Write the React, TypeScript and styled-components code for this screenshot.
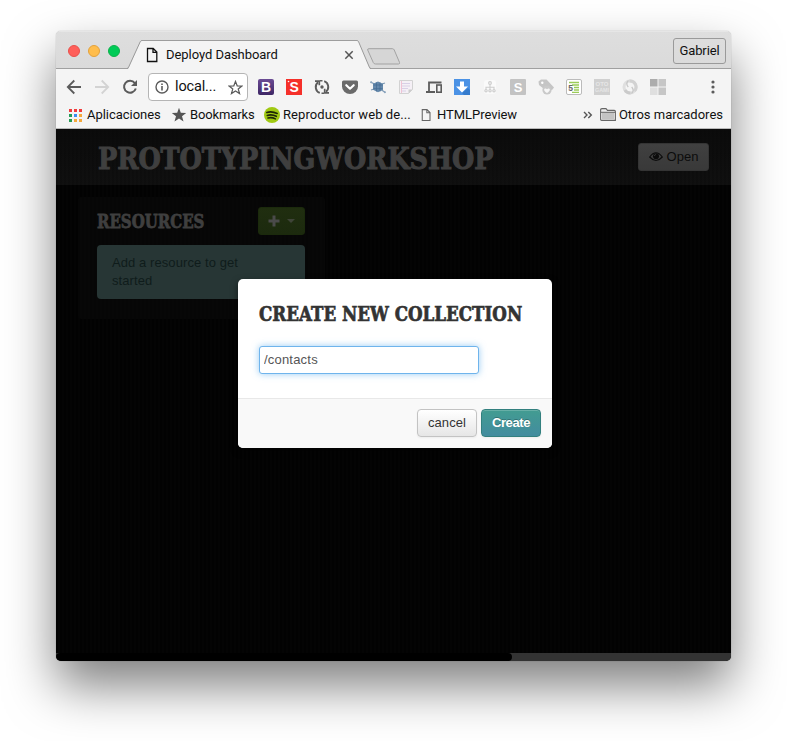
import React from "react";
import styled, { createGlobalStyle } from "styled-components";

const GlobalStyle = createGlobalStyle`
  *, *::before, *::after { box-sizing: border-box; }
  html, body { margin: 0; padding: 0; background: #fff; }
  body { width: 787px; height: 741px; overflow: hidden; }
  svg { display: block; flex: none; }
`;

const Desktop = styled.main`
  width: 787px;
  height: 741px;
  padding: 31px 56px 0;
  background: #fff;
`;

const BrowserWindow = styled.div`
  width: 675px;
  height: 630px;
  display: flex;
  flex-direction: column;
  border-radius: 5px;
  overflow: hidden;
  background: #f4f4f4;
  box-shadow: 0 0 1px rgba(0, 0, 0, 0.45), 0 25px 50px rgba(0, 0, 0, 0.5);
  font-family: Roboto, "Liberation Sans", sans-serif;
  font-size: 13px;
  color: #111;
`;

const TabStrip = styled.div`
  height: 38px;
  flex: none;
  display: flex;
  align-items: flex-end;
  background: linear-gradient(#dedede, #dadada);
  box-shadow: inset 0 1px #e6e6e6, inset 0 -1px #a0a0a0;
`;

const TrafficLights = styled.div`
  width: 71px;
  height: 100%;
  padding: 14px 0 0 12px;
  display: flex;
  gap: 8px;
`;

const Light = styled.span<{ $fill: string; $edge: string }>`
  width: 12px;
  height: 12px;
  border-radius: 50%;
  background: ${(p) => p.$fill};
  border: 1px solid ${(p) => p.$edge};
`;

const Tab = styled.div`
  display: flex;
  height: 29px;
`;

const TabBody = styled.div`
  width: 215px;
  height: 29px;
  display: flex;
  align-items: center;
  background: #f4f4f4;
  border-top: 1px solid #9d9d9d;
  padding: 0 3px 0 4px;
`;

const Label = styled.span<{ $spacing?: number }>`
  white-space: nowrap;
  line-height: 16px;
  letter-spacing: ${(p) => p.$spacing ?? 0}px;
`;

const TabTitle = styled(Label)`
  flex: 1;
  margin-left: 8px;
`;

const NewTab = styled.div`
  margin: 0 0 4px -5px;
`;

const Profile = styled.div`
  width: 53px;
  height: 26px;
  margin: 0 5px 5px auto;
  display: flex;
  align-items: center;
  justify-content: center;
  border: 1px solid #9a9a9a;
  border-radius: 3px;
`;

const Toolbar = styled.div`
  height: 35px;
  flex: none;
  display: flex;
  align-items: center;
  padding: 1px 10px 0;
`;

const NavButtons = styled.div`
  width: 82px;
  display: flex;
  gap: 12px;
`;

const AddressBar = styled.div`
  width: 100px;
  height: 28px;
  display: flex;
  align-items: center;
  padding: 0 4px 0 6px;
  border: 1px solid #b5b5b5;
  border-radius: 4px;
  background: #fff;
  font-size: 14.5px;
`;

const AddressText = styled(Label)`
  flex: 1;
  margin-left: 6px;
`;

const Extensions = styled.div`
  display: flex;
  gap: 12px;
  margin-left: 10px;
`;

const MenuButton = styled.div`
  margin-left: auto;
  display: flex;
`;

const BookmarksBar = styled.div`
  height: 25px;
  flex: none;
  display: flex;
  align-items: center;
  padding: 0 8px 3px 12px;
  border-bottom: 1px solid #b9b9b9;
`;

const Bookmark = styled.div<{ $width?: number; $gap: number }>`
  display: flex;
  align-items: center;
  gap: ${(p) => p.$gap}px;
  width: ${(p) => (p.$width ? `${p.$width}px` : "auto")};
`;

const Chevrons = styled.div`
  margin: 0 7px 0 auto;
`;

const Page = styled.div`
  flex: 1;
  display: flex;
  flex-direction: column;
  position: relative;
  background: repeating-linear-gradient(90deg, #020202 0 2px, #040404 2px 4px);
  font-family: "Liberation Sans", Arial, sans-serif;
`;

const PageHeader = styled.header`
  height: 56px;
  flex: none;
  display: flex;
  align-items: center;
  justify-content: space-between;
  padding: 0 22px 0 42px;
  background: repeating-linear-gradient(90deg, rgba(0, 0, 0, 0.12) 0 2px, transparent 2px 4px),
    linear-gradient(#0b0b0b, #101010);
`;

const SlabHeading = styled.h1<{
  $size: number;
  $width: number;
  $stretch: number;
  $color: string;
  $stroke: number;
  $drop?: number;
}>`
  margin: 0;
  padding-top: ${(p) => p.$drop ?? 0}px;
  width: ${(p) => p.$width}px;
  font: bold ${(p) => p.$size}px/1.2 "DejaVu Serif", serif;
  color: ${(p) => p.$color};
  -webkit-text-stroke: ${(p) => p.$stroke}px ${(p) => p.$color};
  white-space: nowrap;
  transform: scaleX(${(p) => p.$stretch});
  transform-origin: 0 50%;
`;

const OpenButton = styled.button`
  width: 71px;
  height: 28px;
  padding: 0;
  display: flex;
  align-items: center;
  justify-content: center;
  gap: 4px;
  border: 1px solid #343434;
  border-radius: 3px;
  background: linear-gradient(#404040, #393939);
  color: #0c0c0c;
  font: 13px/18px "Liberation Sans", Arial, sans-serif;
`;

const ResourcePanel = styled.section`
  width: 247px;
  height: 122px;
  margin: 12px 0 0 22px;
  padding: 10px 20px 0 19px;
  border-radius: 4px;
  background: repeating-linear-gradient(90deg, #060606 0 2px, #070707 2px 4px);
`;

const PanelHeader = styled.div`
  height: 28px;
  display: flex;
  align-items: center;
  justify-content: space-between;
`;

const AddButton = styled.button`
  width: 47px;
  height: 28px;
  padding: 0 9px;
  display: flex;
  align-items: center;
  justify-content: space-between;
  border: 1px solid #1b2a0c;
  border-radius: 3px;
  background: linear-gradient(#202e10, #1c2a0e);
`;

const Notice = styled.p`
  height: 54px;
  margin: 10px 0 0;
  padding: 9px 50px 0 15px;
  border-radius: 4px;
  background: #273635;
  color: #0f1c1b;
  font-size: 13px;
  line-height: 18px;
  letter-spacing: 0.08px;
`;

const ScrollTrack = styled.div`
  height: 8px;
  margin-top: auto;
  background: #333;
`;

const ScrollThumb = styled.div`
  width: 456px;
  height: 8px;
  border-radius: 4px;
  background: #000;
`;

const Dialog = styled.div`
  position: absolute;
  left: 182px;
  top: 150px;
  width: 314px;
  height: 169px;
  display: flex;
  flex-direction: column;
  border-radius: 5px;
  overflow: hidden;
  background: #fff;
  box-shadow: 0 3px 7px rgba(0, 0, 0, 0.5);
`;

const DialogBody = styled.div`
  flex: 1;
  padding: 23px 21px 0;
`;

const NameInput = styled.input`
  display: block;
  width: 220px;
  height: 28px;
  margin-top: 20px;
  padding: 0 4px 1px;
  border: 1px solid #6fb4ec;
  border-radius: 3px;
  outline: none;
  background: #fff;
  color: #555;
  box-shadow: 0 0 7px rgba(82, 168, 236, 0.6);
  font: 13px/18px "Liberation Sans", Arial, sans-serif;
  letter-spacing: 0.2px;
`;

const DialogFooter = styled.div`
  height: 50px;
  display: flex;
  justify-content: flex-end;
  gap: 4px;
  padding: 10px 11px 0;
  border-top: 1px solid #e8e8e8;
  background: #f9f9f9;
`;

const DialogButton = styled.button<{ $primary?: boolean }>`
  width: 60px;
  height: 28px;
  padding: 0 0 1px;
  border: 1px solid ${(p) => (p.$primary ? "#33807f" : "#c3c3c3")};
  border-radius: 4px;
  background: ${(p) =>
    p.$primary ? "linear-gradient(#429c91, #438c9f)" : "linear-gradient(#fff, #e6e6e6)"};
  box-shadow: inset 0 1px rgba(255, 255, 255, 0.2), 0 1px 2px rgba(0, 0, 0, 0.05);
  color: ${(p) => (p.$primary ? "#fff" : "#333")};
  text-shadow: ${(p) => (p.$primary ? "0 -1px rgba(0,0,0,.25)" : "none")};
  font: ${(p) => (p.$primary ? "bold" : "normal")} 13px/18px "Liberation Sans", Arial, sans-serif;
  letter-spacing: ${(p) => (p.$primary ? "-0.4px" : "0.1px")};
`;

const FileIcon = ({ w = 12, h = 16, color = "#111" }) => (
  <svg width={w} height={h} viewBox="0 0 12 16" fill="none" stroke={color} strokeWidth="1.3">
    <path d="M1.5 1.5h5.7L10.8 5v9.5H1.5zM7 1.5V5.3h3.8" />
  </svg>
);

const EXTENSIONS: React.ReactNode[] = [
  <>
    <defs>
      <linearGradient id="boot" x2="0" y2="1">
        <stop stopColor="#6b4b94" />
        <stop offset="1" stopColor="#3d2664" />
      </linearGradient>
    </defs>
    <rect width="16" height="16" rx="2" fill="url(#boot)" />
    <text x="8" y="12.9" textAnchor="middle" fontSize="14" fontWeight="700" fontFamily="Liberation Sans" fill="#fff">B</text>
  </>,
  <>
    <rect width="16" height="16" fill="#f5302a" />
    <circle cx="2.5" cy="2.5" r=".8" fill="#fff" />
    <text x="8.2" y="13" textAnchor="middle" fontSize="14" fontWeight="700" fontFamily="Liberation Sans" fill="#fff">S</text>
  </>,
  <g fill="none" stroke="#5c5c5c" strokeWidth="1.9">
    <path d="M5.8 13.9A6.2 6.2 0 0 1 4 3.3M10.2 2.1A6.2 6.2 0 0 1 12 12.7" />
    <path d="M1 2.2h4.3v4M15 13.8h-4.3v-4" strokeWidth="1.7" />
    <path d="M6 1.8h2.5M7.5 14.2H10" strokeWidth="1.6" />
    <circle cx="8" cy="8" r="1.7" fill="#5c5c5c" stroke="none" />
  </g>,
  <>
    <path d="M1.5 1.5h13q1.5 0 1.5 1.5v4.5a8 7.5 0 0 1-16 0V3q0-1.5 1.5-1.5z" fill="#6a6a6a" />
    <path d="M4.3 6.2 8 9.7l3.7-3.5" fill="none" stroke="#fff" strokeWidth="2.2" strokeLinecap="round" strokeLinejoin="round" />
  </>,
  <>
    <path d="M.5 3l4 2M15.5 13.5l-4-2.5M1 11l3-1M12 5l3-1" stroke="#7f9ab5" strokeWidth="1.3" />
    <path d="M8 2.5l5 2.3v6L8 13.2l-5-2.4v-6z" fill="#6488ab" />
    <path d="M3.5 6h9M3.5 9.7h9M6.5 3.5v9M10 3.5v9" stroke="#446a92" strokeWidth=".7" />
    <circle cx="1.2" cy="3.2" r="1" fill="#8ca5be" />
    <circle cx="14.8" cy="13.2" r="1" fill="#8ca5be" />
  </>,
  <>
    <path d="M1.5 1.5h13v9l-4 4h-9z" fill="#f5f0f6" stroke="#d2d2d2" />
    <path d="M4 4.5h8M4 7h8M4 9.5h6M4 12h4" stroke="#d9d0e6" />
    <path d="M3.5 2v12" stroke="#f0c3d3" />
    <path d="M10.5 14.5v-4h4z" fill="#ccc" />
  </>,
  <>
    <path d="M3 12V3.5h12.5M0 13h9" fill="none" stroke="#5c5c5c" strokeWidth="1.8" />
    <rect x="10.8" y="6" width="4.4" height="7.2" fill="#f4f4f4" stroke="#5c5c5c" strokeWidth="1.6" />
  </>,
  <>
    <rect width="16" height="16" fill="#4b92e5" />
    <path d="M8 14l6-5 2 2v5H10z" fill="#357bcd" />
    <path d="M6 2.5h4v5h4L8 13.5 2 7.5h4z" fill="#fff" />
  </>,
  <>
    <rect x="2" y="1" width="12" height="14" rx="3" fill="#fafafa" />
    <path d="M8 5v6M4 11V8.3h8V11" fill="none" stroke="#cdcdcd" strokeWidth="1.1" />
    <g fill="#f4f4f4" stroke="#cdcdcd" strokeWidth="1.1">
      <circle cx="8" cy="4" r="1.4" /><circle cx="4" cy="11.7" r="1.2" />
      <circle cx="8" cy="11.7" r="1.2" /><circle cx="12" cy="11.7" r="1.2" />
    </g>
  </>,
  <>
    <rect width="16" height="16" rx="1" fill="#c3c3c3" />
    <text x="8" y="12.5" textAnchor="middle" fontSize="13" fontWeight="700" fontFamily="Liberation Sans" fill="#fff">S</text>
  </>,
  <>
    <path d="M.5 2.5 3 .5h5.5l7.5 8-2 2.5-8-1-5-4z" fill="#c5c5c5" />
    <circle cx="4.3" cy="3.8" r="1.2" fill="#fff" />
    <circle cx="9" cy="11" r="4.6" fill="#c9c9c9" />
    <path d="M9 14C4 11.3 6.6 8.2 9 10.2c2.4-2 5 1.1 0 3.8z" fill="#f7f7f7" />
  </>,
  <>
    <rect x=".5" y=".5" width="15" height="15" rx="1.5" fill="#fff" stroke="#bbb" />
    <path d="M3 3.5h10M6 6h7M8 8.5h5M8 11h5M6 13.3h7" stroke="#9bcc58" strokeWidth="1.3" />
    <text x="4.5" y="12" textAnchor="middle" fontSize="8.5" fontWeight="700" fontFamily="Liberation Sans" fill="#666">5</text>
  </>,
  <>
    <rect width="16" height="16" fill="#d0d0d0" />
    <g textAnchor="middle" fontSize="6" fontWeight="700" fontFamily="Liberation Sans" fill="#e6e6e6">
      <text x="8" y="7.2">OTO</text>
      <text x="8" y="13" textLength="14" lengthAdjust="spacingAndGlyphs">GAMI</text>
    </g>
  </>,
  <g fill="none" strokeWidth="3">
    <circle cx="8" cy="8" r="6" stroke="#dfdfdf" />
    <path d="M7.5 2A6 6 0 0 1 12.5 12" stroke="#d2d2d2" />
    <path d="M8.5 14A6 6 0 0 1 3 11" stroke="#cacaca" />
    <path d="M6.5 1.5Q3.2 4.5 6.3 8M9.5 14.5Q12.8 11.5 9.7 8" stroke="#c6c6c6" strokeWidth="1.2" />
  </g>,
  <>
    <path d="M0 0h7.5v7.5H0z" fill="#acacac" />
    <path d="M8.5 0H16v7.5H8.5zM8.5 8.5H16V16H8.5z" fill="#c6c6c6" />
    <path d="M0 8.5h7.5V16H0z" fill="#dfdfdf" />
  </>,
];

const APP_COLORS = ["#f03c3c", "#f03c3c", "#f03c3c", "#249b55", "#3c8ef0", "#f5a93a", "#249b55", "#f5a93a", "#f5a93a"];

export default function App() {
  return (
    <>
      <GlobalStyle />
      <Desktop>
        <BrowserWindow>
          <TabStrip>
            <TrafficLights>
              <Light $fill="#ff5f5a" $edge="#e9504b" />
              <Light $fill="#ffbd4c" $edge="#e3a13b" />
              <Light $fill="#00cb57" $edge="#0db14b" />
            </TrafficLights>
            <Tab>
              <svg width="15" height="29" viewBox="0 0 15 29">
                <path d="M1 29 13.4 1.8Q14 .5 15 .5V29z" fill="#f4f4f4" />
                <path d="M0 28.5Q1 28.5 1.7 27L13.2 1.8Q13.8.5 15 .5" fill="none" stroke="#999" />
              </svg>
              <TabBody>
                <FileIcon />
                <TabTitle $spacing={-0.05}>Deployd Dashboard</TabTitle>
                <svg width="10" height="10" viewBox="0 0 10 10">
                  <path d="M1.3 1.3l7.4 7.4m0-7.4L1.3 8.7" stroke="#555" strokeWidth="1.5" />
                </svg>
              </TabBody>
              <svg width="14" height="29" viewBox="0 0 14 29">
                <path d="M0 .5Q1 .5 1.6 1.8L13 29H0z" fill="#f4f4f4" />
                <path d="M0 .5Q1 .5 1.6 1.8L12.3 27q.7 1.5 1.7 1.5" fill="none" stroke="#999" />
              </svg>
            </Tab>
            <NewTab>
              <svg width="35" height="17" viewBox="0 0 35 17">
                <path d="M3 .7h23.5q1.2 0 1.7 1.2l5.3 12.5q.6 1.6-1 1.6H9.5Q8 16 7.3 14.6L1.7 2Q1.3.7 3 .7z" fill="#d6d6d6" stroke="#a2a2a2" />
              </svg>
            </NewTab>
            <Profile><Label $spacing={-0.15}>Gabriel</Label></Profile>
          </TabStrip>

          <Toolbar>
            <NavButtons>
              <svg width="16" height="16" viewBox="0 0 16 16" fill="none" stroke="#5b5b5b" strokeWidth="1.8">
                <path d="M15 8H2M8.3 1.5 1.8 8l6.5 6.5" />
              </svg>
              <svg width="16" height="16" viewBox="0 0 16 16" fill="none" stroke="#d3d3d3" strokeWidth="1.8">
                <path d="M1 8h13M7.7 1.5 14.2 8l-6.5 6.5" />
              </svg>
              <svg width="16" height="16" viewBox="0 0 16 16">
                <path d="M12.8 4A6 6 0 1 0 13.8 9.5" fill="none" stroke="#5b5b5b" strokeWidth="2" />
                <path d="M15 1v6H9z" fill="#5b5b5b" />
              </svg>
            </NavButtons>
            <AddressBar>
              <svg width="14" height="14" viewBox="0 0 14 14">
                <circle cx="7" cy="7" r="6" fill="none" stroke="#5b5b5b" strokeWidth="1.4" />
                <path d="M7 6v4.4M7 3.4V5" stroke="#5b5b5b" strokeWidth="1.6" />
              </svg>
              <AddressText $spacing={-0.15}>local...</AddressText>
              <svg width="15" height="15" viewBox="0 0 16 16">
                <path d="M8 1.5l1.8 4.7 5 .3-3.9 3.1 1.4 4.9L8 11.8l-4.3 2.7 1.4-4.9L1.2 6.5l5-.3z" fill="none" stroke="#5b5b5b" strokeWidth="1.3" />
              </svg>
            </AddressBar>
            <Extensions>
              {EXTENSIONS.map((icon, i) => (
                <svg key={i} width="16" height="16" viewBox="0 0 16 16">{icon}</svg>
              ))}
            </Extensions>
            <MenuButton>
              <svg width="16" height="16" viewBox="0 0 16 16" fill="#5b5b5b">
                <circle cx="8" cy="3" r="1.6" /><circle cx="8" cy="8" r="1.6" /><circle cx="8" cy="13" r="1.6" />
              </svg>
            </MenuButton>
          </Toolbar>

          <BookmarksBar>
            <Bookmark $width={103} $gap={5}>
              <svg width="14" height="14" viewBox="0 0 14 14">
                {APP_COLORS.map((c, i) => (
                  <rect key={i} x={1 + (i % 3) * 5} y={1 + Math.floor(i / 3) * 5} width="3" height="3" fill={c} />
                ))}
              </svg>
              <Label $spacing={-0.03}>Aplicaciones</Label>
            </Bookmark>
            <Bookmark $width={93} $gap={3}>
              <svg width="16" height="16" viewBox="0 0 16 16">
                <path d="M8 .8l1.8 5 5.4.2-4.2 3.3 1.5 5.2L8 11.5l-4.5 3L5 9.3.8 6l5.4-.2z" fill="#555" />
              </svg>
              <Label $spacing={-0.12}>Bookmarks</Label>
            </Bookmark>
            <Bookmark $width={157} $gap={3}>
              <svg width="16" height="16" viewBox="0 0 16 16">
                <circle cx="8" cy="8" r="8" fill="#a0c912" />
                <path d="M2.8 5.5q5-1.6 10.4 1M3.3 8.4q4.5-1.4 9 .9M4 11q3.8-1 7.4.9" fill="none" stroke="#1d2607" strokeWidth="1.6" strokeLinecap="round" />
              </svg>
              <Label $spacing={0.08}>Reproductor web de...</Label>
            </Bookmark>
            <Bookmark $gap={6}>
              <FileIcon w={10} h={14} color="#666" />
              <Label $spacing={-0.05}>HTMLPreview</Label>
            </Bookmark>
            <Chevrons>
              <svg width="10" height="8" viewBox="0 0 10 8">
                <path d="M1 1l3 3-3 3M5.3 1l3 3-3 3" fill="none" stroke="#555" strokeWidth="1.4" />
              </svg>
            </Chevrons>
            <Bookmark $gap={3}>
              <svg width="16" height="13" viewBox="0 0 16 13">
                <path d="M.6 11.5V2Q.6.6 2 .6h4l1.5 1.8h6.8q1.1 0 1.1 1v9H1.6q-1 0-1-.9z" fill="#ececec" stroke="#666" strokeWidth="1.1" />
                <path d="M2 4.6h12v6.5H2z" fill="#c4c4c4" />
                <path d="M1 4.3h14" stroke="#666" />
              </svg>
              <Label>Otros marcadores</Label>
            </Bookmark>
          </BookmarksBar>

          <Page>
            <PageHeader>
              <SlabHeading $size={29.5} $width={397} $stretch={0.865} $stroke={1.1} $drop={4} $color="#3f3f3f">
                PROTOTYPINGWORKSHOP
              </SlabHeading>
              <OpenButton>
                <svg width="14" height="12" viewBox="0 0 14 12">
                  <path d="M.7 6Q7-2.5 13.3 6 7 13 .7 6z" fill="none" stroke="#0c0c0c" strokeWidth="1.2" />
                  <circle cx="7" cy="5.3" r="3" fill="#0c0c0c" />
                  <path d="M5.3 5Q5.5 3.6 7 3.5" fill="none" stroke="#3c3c3c" strokeWidth=".8" />
                </svg>
                Open
              </OpenButton>
            </PageHeader>
            <ResourcePanel>
              <PanelHeader>
                <SlabHeading as="h2" $size={18} $width={108} $stretch={0.832} $stroke={0.8} $drop={2} $color="#3f3f3f">
                  RESOURCES
                </SlabHeading>
                <AddButton>
                  <svg width="12" height="12" viewBox="0 0 12 12"><path d="M6 .5v11M.5 6h11" stroke="#4a4a4a" strokeWidth="3" /></svg>
                  <svg width="8" height="4" viewBox="0 0 8 4"><path d="M0 0h8L4 4z" fill="#3f4438" /></svg>
                </AddButton>
              </PanelHeader>
              <Notice>Add a resource to get started</Notice>
            </ResourcePanel>
            <ScrollTrack><ScrollThumb /></ScrollTrack>
            <Dialog>
              <DialogBody>
                <SlabHeading as="h3" $size={20} $width={263} $stretch={0.836} $stroke={0.7} $color="#333">
                  CREATE NEW COLLECTION
                </SlabHeading>
                <NameInput defaultValue="/contacts" />
              </DialogBody>
              <DialogFooter>
                <DialogButton>cancel</DialogButton>
                <DialogButton $primary>Create</DialogButton>
              </DialogFooter>
            </Dialog>
          </Page>
        </BrowserWindow>
      </Desktop>
    </>
  );
}
